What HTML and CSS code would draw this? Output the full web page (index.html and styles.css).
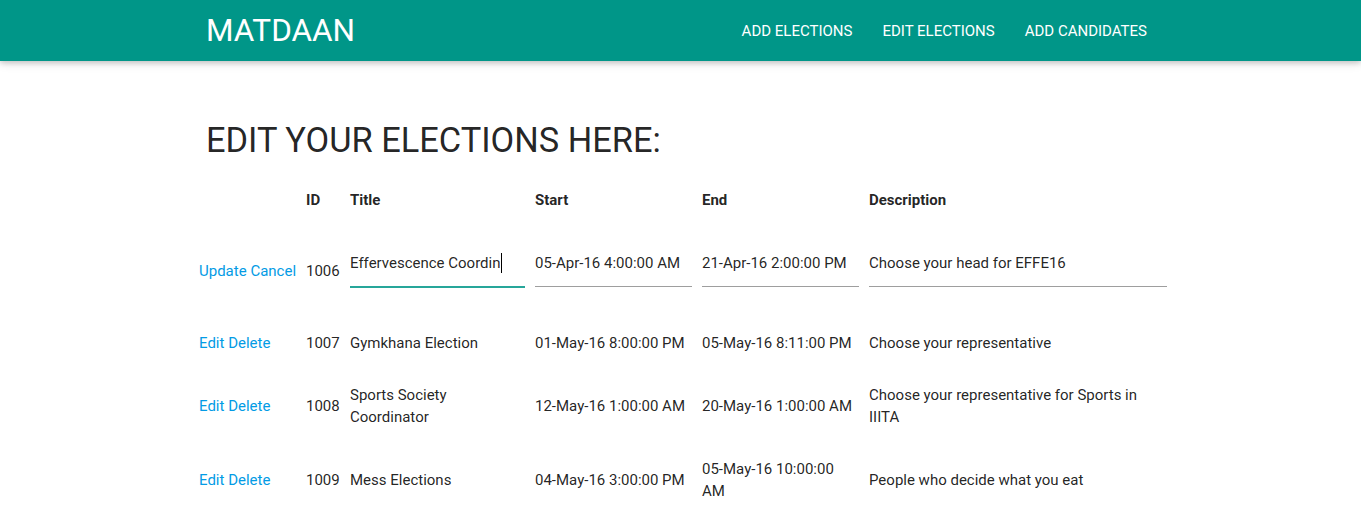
FILE: index.html
```html
<!DOCTYPE html>
<html>
<head>
<meta charset="utf-8">
<title>Matdaan</title>
<link rel="stylesheet" href="styles.css">
</head>
<body>
<nav class="nav">
  <div class="nav-inner">
    <a class="brand" href="#">MATDAAN</a>
    <ul class="nav-links">
      <li><a href="#">ADD ELECTIONS</a></li>
      <li><a href="#">EDIT ELECTIONS</a></li>
      <li><a href="#">ADD CANDIDATES</a></li>
    </ul>
  </div>
</nav>
<main class="main">
  <h4 class="title">EDIT YOUR ELECTIONS HERE:</h4>
  <table class="elections">
    <colgroup>
      <col class="c-act"><col class="c-id"><col class="c-title"><col class="c-start"><col class="c-end"><col class="c-desc">
    </colgroup>
    <thead>
      <tr><th></th><th>ID</th><th>Title</th><th>Start</th><th>End</th><th>Description</th></tr>
    </thead>
    <tbody>
      <tr>
        <td class="act"><a href="#">Update</a> <a href="#">Cancel</a></td>
        <td>1006</td>
        <td><div class="caret-wrap"><input id="t1" class="field focused" type="text" value="Effervescence Coordin"></div></td>
        <td><input class="field" type="text" value="05-Apr-16 4:00:00 AM"></td>
        <td><input class="field" type="text" value="21-Apr-16 2:00:00 PM"></td>
        <td><input class="field" type="text" value="Choose your head for EFFE16"></td>
      </tr>
      <tr>
        <td class="act"><a href="#">Edit</a> <a href="#">Delete</a></td>
        <td>1007</td>
        <td>Gymkhana Election</td>
        <td>01-May-16 8:00:00 PM</td>
        <td>05-May-16 8:11:00 PM</td>
        <td>Choose your representative</td>
      </tr>
      <tr>
        <td class="act"><a href="#">Edit</a> <a href="#">Delete</a></td>
        <td>1008</td>
        <td>Sports Society Coordinator</td>
        <td>12-May-16 1:00:00 AM</td>
        <td>20-May-16 1:00:00 AM</td>
        <td>Choose your representative for Sports in IIITA</td>
      </tr>
      <tr>
        <td class="act"><a href="#">Edit</a> <a href="#">Delete</a></td>
        <td>1009</td>
        <td>Mess Elections</td>
        <td>04-May-16 3:00:00 PM</td>
        <td>05-May-16 10:00:00 AM</td>
        <td>People who decide what you eat</td>
      </tr>
    </tbody>
  </table>
</main>
</body>
</html>
```

FILE: styles.css
```css
html { font-size: 15px; }
body {
  margin: 0;
  font-family: Roboto, "Liberation Sans", sans-serif;
  font-weight: 400;
  line-height: 1.5;
  color: rgba(0,0,0,0.87);
  background: #fff;
}
a { text-decoration: none; }

.nav {
  height: 61px;
  background: #009688;
  box-shadow: 0 2px 5px 0 rgba(0,0,0,0.16), 0 2px 10px 0 rgba(0,0,0,0.12);
  color: #fff;
}
.nav-inner {
  display: flex;
  justify-content: space-between;
  align-items: center;
  height: 61px;
  padding: 0 199px 0 206px;
}
.brand {
  color: #fff;
  font-size: 31.5px;
  line-height: 59px;
}
.nav-links {
  display: flex;
  list-style: none;
  margin: 0;
  padding: 0;
}
.nav-links a {
  display: block;
  color: #fff;
  font-size: 15px;
  line-height: 60px;
  padding: 0 15px;
}

.main {
  padding: 61px 0 0 194px;
}
.title {
  margin: 0 0 14px 12px;
  font-size: 34.4px;
  font-weight: 400;
  line-height: 110%;
}

.elections {
  border-collapse: collapse;
  border-spacing: 0;
  table-layout: fixed;
  width: 978px;
  font-size: 15px;
}
.c-act { width: 107px; }
.c-id { width: 44px; }
.c-title { width: 185px; }
.c-start { width: 167px; }
.c-end { width: 167px; }
.c-desc { width: 308px; }

.elections th, .elections td {
  padding: 15px 5px;
  text-align: left;
  vertical-align: middle;
  line-height: 22px;
}
.elections th { font-weight: 700; }
.act { white-space: nowrap; }
.act a { color: #039be5; }

.field {
  display: block;
  box-sizing: content-box;
  width: 100%;
  height: 45px;
  margin: 0 0 15px 0;
  padding: 0;
  border: none;
  border-bottom: 1px solid #9e9e9e;
  border-radius: 0;
  outline: none;
  background: transparent;
  font-family: inherit;
  font-size: 15px;
  color: rgba(0,0,0,0.87);
  box-shadow: none;
}
.field.focused {
  border-bottom: 1px solid #26a69a;
  box-shadow: 0 1px 0 0 #26a69a;
}
.caret-wrap {
  position: relative;
}
.caret-wrap::after {
  content: "";
  position: absolute;
  left: 151px;
  top: 12px;
  width: 1px;
  height: 20px;
  background: #000;
}
```
